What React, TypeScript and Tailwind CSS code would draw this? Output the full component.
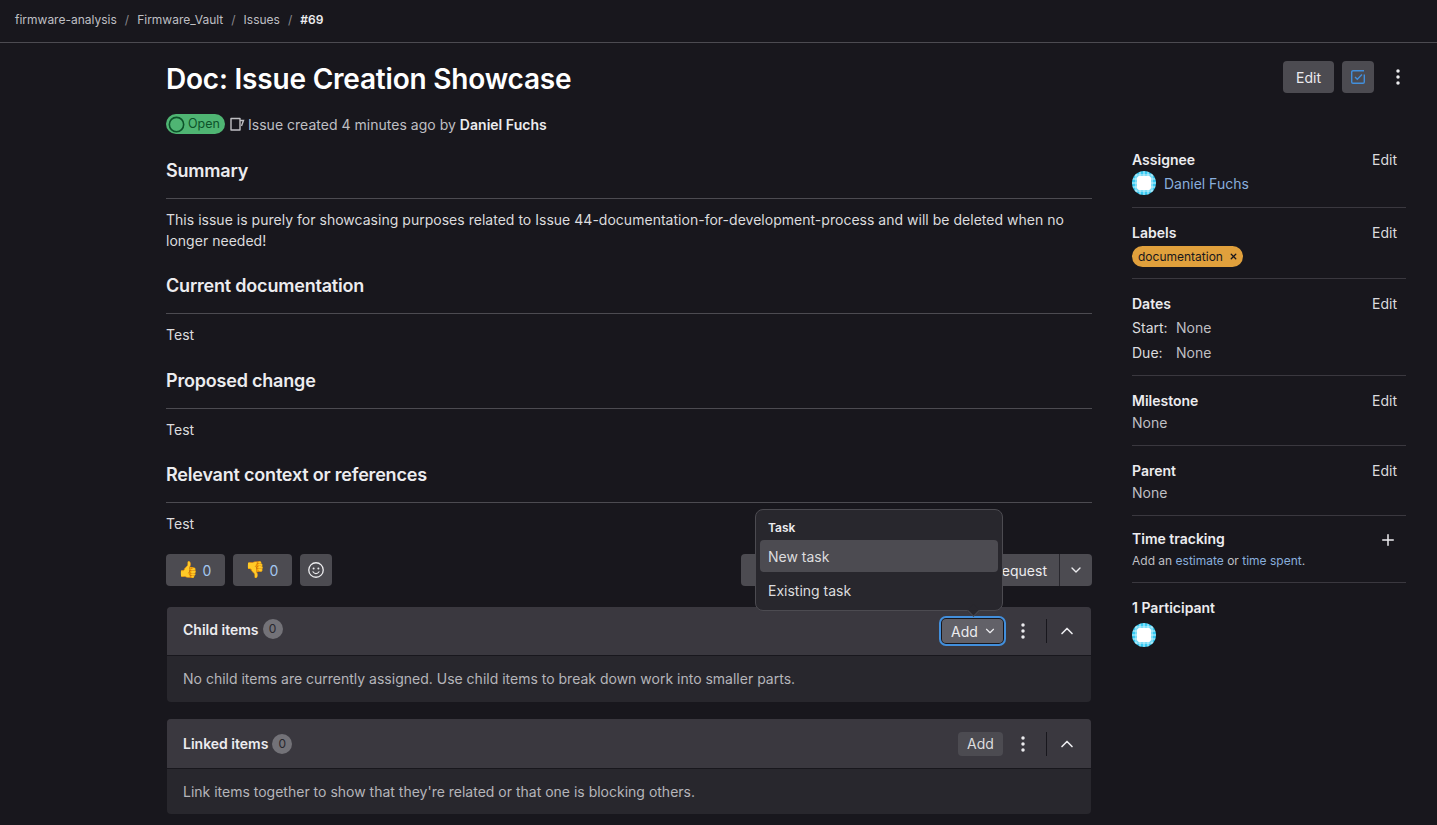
import React from 'react';
import { ChevronDown, ChevronUp, Plus, X } from 'lucide-react';

const crumbs = ['firmware-analysis', 'Firmware_Vault', 'Issues'];

function Avatar() {
  return (
    <svg width="24" height="24" viewBox="0 0 24 24" className="shrink-0">
      <defs>
        <clipPath id="avatar-clip">
          <circle cx="12" cy="12" r="12" />
        </clipPath>
      </defs>
      <g clipPath="url(#avatar-clip)">
        <rect width="24" height="24" fill="#35c9f2" />
        <path
          d="M4 0v24M8 0v24M12 0v24M16 0v24M20 0v24M0 4h24M0 8h24M0 12h24M0 16h24M0 20h24"
          stroke="#c9f2fc"
          strokeWidth="1"
        />
        <rect x="5" y="5" width="14" height="14" rx="2" fill="#ffffff" />
      </g>
    </svg>
  );
}

function Section({ title, children }: { title: string; children: React.ReactNode }) {
  return (
    <div>
      <h2 className="text-[18px] leading-[24px] font-semibold text-[#ececef] tracking-[-0.2px] pb-[15px] border-b border-[#4c4b51]">{title}</h2>
      <div className="text-[14px] leading-[21px] text-[#dcdcde] tracking-[0.02px] mt-[10px]">{children}</div>
    </div>
  );
}

function SideBlock({ title, edit = true, className, children }: { title: string; edit?: boolean; className: string; children: React.ReactNode }) {
  return (
    <div className={`border-b border-[#3a383f] ${className}`}>
      <div className="flex justify-between items-center h-[20px] pr-[9px]">
        <span className="text-[14px] font-semibold text-[#ececef]">{title}</span>
        {edit && <span className="text-[14px] text-[#dcdcde]">Edit</span>}
      </div>
      {children}
    </div>
  );
}

function Count() {
  return (
    <span className="ml-[4px] w-[20px] h-[20px] rounded-full bg-[#737278] text-[#28272d] text-[12px] flex items-center justify-center">0</span>
  );
}

function Dots() {
  return (
    <svg width="16" height="16" viewBox="0 0 16 16" fill="#ececef" className="block">
      <circle cx="8" cy="2" r="1.75" />
      <circle cx="8" cy="8" r="1.75" />
      <circle cx="8" cy="14" r="1.75" />
    </svg>
  );
}

function WidgetHeader({ title, addButton, className, titleClass }: { title: string; addButton: React.ReactNode; className: string; titleClass?: string }) {
  return (
    <div className={`bg-[#3a383f] rounded-t-[4px] border-b border-[#18171d] flex items-center pl-[16px] pr-[14px] ${className}`}>
      <div className={`flex items-center ${titleClass ?? ''}`}>
        <span className="text-[14px] font-semibold text-[#ececef]">{title}</span>
        <Count />
      </div>
      <div className="ml-auto flex items-center">
        {addButton}
        <span className="ml-[12px]"><Dots /></span>
        <span className="ml-[15px] w-px h-[24px] bg-[#18171d]" />
        <ChevronUp size={20} className="ml-[10px] text-[#ececef]" />
      </div>
    </div>
  );
}

export default function App() {
  return (
    <div className="h-[825px] overflow-hidden bg-[#18171d] text-[#dcdcde] font-['Inter',sans-serif]">
      <nav className="h-[43px] border-b border-[#4c4b51] flex items-center pl-[15px] pb-[3px] text-[12px] text-[#bfbfc3]">
        {crumbs.map((c) => (
          <React.Fragment key={c}>
            <span>{c}</span>
            <span className="mx-[8px] text-[#89888d]">/</span>
          </React.Fragment>
        ))}
        <span className="font-semibold text-[#ececef]">#69</span>
      </nav>

      <div className="flex pl-[166px] pr-[31px]">
        <main className="w-[926px] shrink-0">
          <h1 className="text-[28px] leading-[36px] font-semibold text-white mt-[18px] tracking-[-0.2px]">Doc: Issue Creation Showcase</h1>
          <div className="flex items-center mt-[17px] h-[20px] text-[14px] text-[#bfbfc3] tracking-[0.02px]">
            <span className="flex items-center h-[20px] w-[59px] rounded-full bg-[#4fb573] text-[#0d532a] text-[12.5px] pl-[2px]">
              <svg width="17" height="17" viewBox="0 0 16 16" fill="none" className="mr-[3px]">
                <circle cx="8" cy="8" r="6.75" stroke="#0d532a" strokeWidth="1.5" />
              </svg>
              Open
            </span>
            <svg width="16" height="16" viewBox="0 0 16 16" fill="none" className="ml-[4px] mr-[3px]" stroke="#bfbfc3" strokeWidth="1.4">
              <path d="M2 2.5h9v11.5H2z" strokeLinejoin="round" />
              <path d="M11 4.5h3.5L12.5 10" />
            </svg>
            <span>Issue created 4 minutes ago by <span className="font-semibold text-[#ececef]">Daniel Fuchs</span></span>
          </div>

          <div className="mt-[25px] flex flex-col gap-[23.4px]">
            <Section title="Summary">
              This issue is purely for showcasing purposes related to Issue 44-documentation-for-development-process and will be deleted when no longer needed!
            </Section>
            <Section title="Current documentation">Test</Section>
            <Section title="Proposed change">Test</Section>
            <Section title="Relevant context or references">Test</Section>
          </div>

          <div className="relative flex items-center mt-[20px] h-[32px]">
            <button className="w-[59px] h-[32px] rounded-[4px] bg-[#4c4b51] flex items-center justify-center gap-[5px] pr-[2px] text-[14px] text-[#a3c7f0]">
              <span className="text-[16px] leading-none font-['DejaVu_Sans',sans-serif] text-[#f5a623]">👍</span>0
            </button>
            <button className="ml-[8px] w-[59px] h-[32px] rounded-[4px] bg-[#4c4b51] flex items-center justify-center gap-[5px] pr-[2px] text-[14px] text-[#a3c7f0]">
              <span className="text-[16px] leading-none font-['DejaVu_Sans',sans-serif] text-[#f5a623]">👎</span>0
            </button>
            <button className="ml-[8px] w-[32px] h-[32px] rounded-[4px] bg-[#4c4b51] flex items-center justify-center">
              <svg width="16" height="16" viewBox="0 0 16 16" fill="none">
                <circle cx="8" cy="8" r="7.25" stroke="#ececef" strokeWidth="1.3" />
                <circle cx="5.6" cy="6.6" r="1" fill="#ececef" />
                <circle cx="10.4" cy="6.6" r="1" fill="#ececef" />
                <path d="M5 9.8c.8 1.3 1.8 1.8 3 1.8s2.2-.5 3-1.8" stroke="#ececef" strokeWidth="1.2" strokeLinecap="round" />
              </svg>
            </button>
            <div className="ml-auto flex h-[32px] rounded-[4px] bg-[#4c4b51] text-[14px] text-[#ececef]">
              <span className="w-[319px] flex items-center justify-end pr-[12px] border-r border-[#28272d]">Create merge request</span>
              <span className="w-[32px] flex items-center justify-center"><ChevronDown size={16} /></span>
            </div>
          </div>

          <div className="relative mt-[21px] ml-[1px] rounded-[4px] w-[924px] bg-[#28272d]">
            <WidgetHeader
              title="Child items"
              className="h-[49px]"
              titleClass="mb-[4px]"
              addButton={
                <button className="w-[61px] h-[24px] rounded-[4px] bg-[#626168] text-[14px] text-[#ececef] flex items-center pl-[9px] gap-[5px] ring-1 ring-[#18171d] outline-2 outline-offset-1 outline-[#428fdc]">
                  Add <ChevronDown size={14} />
                </button>
              }
            />
            <p className="h-[46px] flex items-center pb-[2px] pl-[16px] text-[14px] text-[#b5b5ba]">No child items are currently assigned. Use child items to break down work into smaller parts.</p>

            <div className="absolute left-[588px] bottom-[91px] w-[248px] h-[102px] rounded-[8px] bg-[#28272d] border border-[#4c4b51] p-[4px] z-10">
              <div className="text-[12px] leading-[16px] font-semibold text-[#ececef] pl-[8px] pt-[6px] pb-[4px]">Task</div>
              <div className="h-[32px] rounded-[4px] bg-[#4c4b51] flex items-center pl-[8px] text-[14px] text-[#dcdcde]">New task</div>
              <div className="h-[36px] flex items-center pl-[8px] text-[14px] text-[#dcdcde]">Existing task</div>
              <span className="absolute left-[213px] -bottom-[5px] w-[9px] h-[9px] rotate-45 bg-[#28272d] border-r border-b border-[#4c4b51]" />
            </div>
          </div>

          <div className="mt-[17px] ml-[1px] rounded-[4px] w-[924px] bg-[#28272d]">
            <WidgetHeader
              title="Linked items"
              className="h-[50px]"
              addButton={
                <button className="w-[45px] h-[24px] rounded-[4px] bg-[#4c4b51] text-[14px] text-[#dcdcde] flex items-center justify-center">Add</button>
              }
            />
            <p className="h-[45px] flex items-center pl-[16px] text-[14px] text-[#b5b5ba]">Link items together to show that they're related or that one is blocking others.</p>
          </div>
        </main>

        <aside className="w-[274px] ml-[40px] shrink-0">
          <div className="flex justify-end items-center mt-[18px] h-[32px] -mr-[8px]">
            <button className="w-[51px] h-[32px] rounded-[4px] bg-[#4c4b51] text-[14px] text-[#ececef]">Edit</button>
            <button className="ml-[8px] w-[32px] h-[32px] rounded-[4px] bg-[#4c4b51] flex items-center justify-center">
              <svg width="16" height="16" viewBox="0 0 16 16" fill="none" stroke="#428fdc" strokeWidth="1.4">
                <path d="M14.3 5.5v7.5a1.3 1.3 0 0 1-1.3 1.3H3A1.3 1.3 0 0 1 1.7 13V3A1.3 1.3 0 0 1 3 1.7h11" />
                <path d="M5 8l2.3 2.3L12 5.6" />
              </svg>
            </button>
            <span className="ml-[8px] w-[32px] flex justify-center"><Dots /></span>
          </div>

          <div className="mt-[56px]">
            <SideBlock title="Assignee" className="h-[59px]">
              <div className="flex items-center gap-[8px] mt-[2px] h-[24px] text-[14px] text-[#88aedc]">
                <Avatar />
                <span>Daniel Fuchs</span>
              </div>
            </SideBlock>
          </div>
          <SideBlock title="Labels" className="pt-[14px] h-[71px]">
            <span className="inline-flex items-center mt-[4px] h-[21px] rounded-full bg-[#e0a03c] text-[#18171d] text-[12px] pl-[6px] pr-[5px] gap-[6px]">
              documentation <X size={9} strokeWidth={3.5} />
            </span>
          </SideBlock>
          <SideBlock title="Dates" className="pt-[14px] h-[97px]">
            <div className="text-[14px] leading-[25px] mt-[2px]">
              <div><span className="inline-block w-[44px] text-[#dcdcde]">Start:</span><span className="text-[#bfbfc3]">None</span></div>
              <div><span className="inline-block w-[44px] text-[#dcdcde]">Due:</span><span className="text-[#bfbfc3]">None</span></div>
            </div>
          </SideBlock>
          <SideBlock title="Milestone" className="pt-[14px] h-[70px]">
            <div className="text-[14px] leading-[22px] mt-[2px] text-[#bfbfc3]">None</div>
          </SideBlock>
          <SideBlock title="Parent" className="pt-[14px] h-[70px]">
            <div className="text-[14px] leading-[22px] mt-[2px] text-[#bfbfc3]">None</div>
          </SideBlock>
          <SideBlock title="Time tracking" edit={false} className="relative pt-[12px] h-[67px]">
            <Plus size={18} className="absolute right-[9px] top-[15px] text-[#ececef]" />
            <div className="text-[12px] leading-[16px] mt-[5px] text-[#bfbfc3]">
              Add an <span className="text-[#88aedc]">estimate</span> or <span className="text-[#88aedc]">time spent</span>.
            </div>
          </SideBlock>
          <div className="pt-[15px]">
            <div className="text-[14px] leading-[20px] font-semibold text-[#ececef]">1 Participant</div>
            <div className="mt-[5px]"><Avatar /></div>
          </div>
        </aside>
      </div>
    </div>
  );
}
